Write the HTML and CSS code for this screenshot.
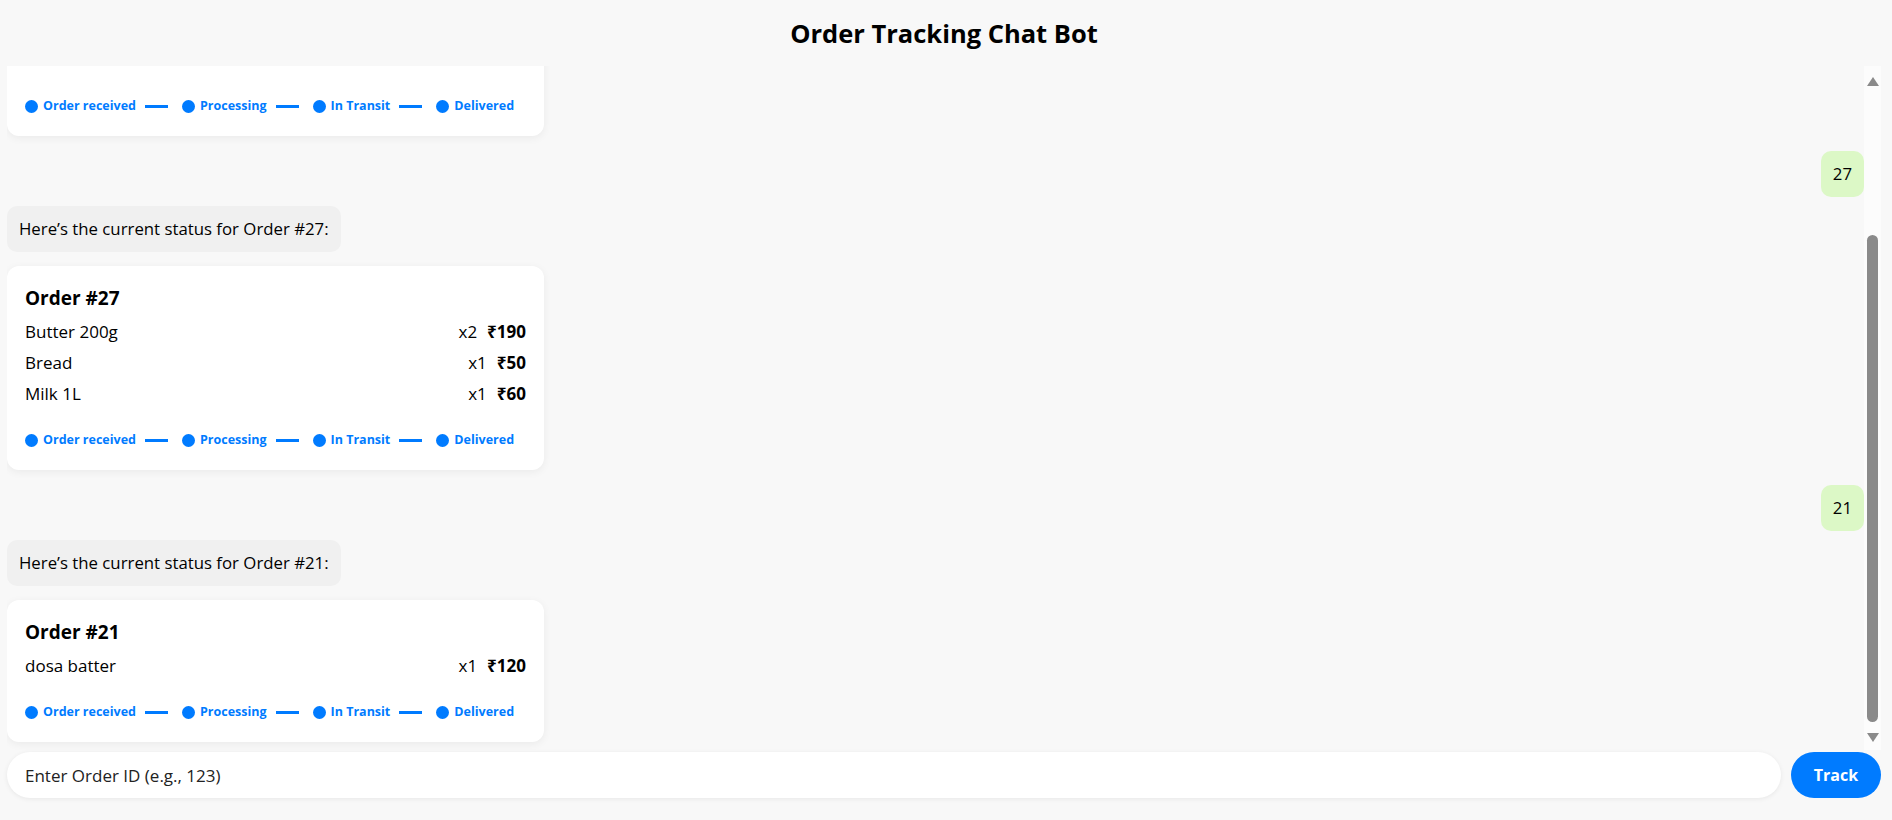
FILE: index.html
```html
<!DOCTYPE html>
<html lang="en">
<head>
<meta charset="utf-8">
<title>Order Tracking Chat Bot</title>
<link rel="stylesheet" href="styles.css">
</head>
<body>
<div class="app">
  <header class="header">
    <h1 class="title">Order Tracking Chat Bot</h1>
  </header>

  <div class="chat">
    <div class="viewport">
      <div class="thread">
        <div class="msg user">25</div>
        <div class="msg bot">Here’s the current status for Order #25:</div>
        <div class="card">
          <h3 class="card-title">Order #25</h3>
          <div class="item"><span class="name">Curd 500g</span><span class="qty">x1</span><span class="price">₹45</span></div>
          <div class="item"><span class="name">Milk 500ml</span><span class="qty">x2</span><span class="price">₹56</span></div>
          <div class="status">
            <span class="step"><span class="dot"></span>Order received</span>
            <span class="line"></span>
            <span class="step"><span class="dot"></span>Processing</span>
            <span class="line"></span>
            <span class="step"><span class="dot"></span>In Transit</span>
            <span class="line"></span>
            <span class="step"><span class="dot"></span>Delivered</span>
          </div>
        </div>

        <div class="msg user">27</div>
        <div class="msg bot">Here’s the current status for Order #27:</div>
        <div class="card">
          <h3 class="card-title">Order #27</h3>
          <div class="item"><span class="name">Butter 200g</span><span class="qty">x2</span><span class="price">₹190</span></div>
          <div class="item"><span class="name">Bread</span><span class="qty">x1</span><span class="price">₹50</span></div>
          <div class="item"><span class="name">Milk 1L</span><span class="qty">x1</span><span class="price">₹60</span></div>
          <div class="status">
            <span class="step"><span class="dot"></span>Order received</span>
            <span class="line"></span>
            <span class="step"><span class="dot"></span>Processing</span>
            <span class="line"></span>
            <span class="step"><span class="dot"></span>In Transit</span>
            <span class="line"></span>
            <span class="step"><span class="dot"></span>Delivered</span>
          </div>
        </div>

        <div class="msg user">21</div>
        <div class="msg bot">Here’s the current status for Order #21:</div>
        <div class="card">
          <h3 class="card-title">Order #21</h3>
          <div class="item"><span class="name">dosa batter</span><span class="qty">x1</span><span class="price">₹120</span></div>
          <div class="status">
            <span class="step"><span class="dot"></span>Order received</span>
            <span class="line"></span>
            <span class="step"><span class="dot"></span>Processing</span>
            <span class="line"></span>
            <span class="step"><span class="dot"></span>In Transit</span>
            <span class="line"></span>
            <span class="step"><span class="dot"></span>Delivered</span>
          </div>
        </div>
      </div>
    </div>

    <div class="scrollbar" aria-hidden="true">
      <span class="sb-arrow up"></span>
      <div class="sb-track"><div class="sb-thumb"></div></div>
      <span class="sb-arrow down"></span>
    </div>
  </div>

  <form class="composer">
    <input class="order-input" type="text" placeholder="Enter Order ID (e.g., 123)">
    <button class="track-btn" type="button">Track</button>
  </form>
</div>
</body>
</html>
```

FILE: styles.css
```css
* {
  box-sizing: border-box;
}

html, body {
  margin: 0;
  padding: 0;
  height: 100%;
}

body {
  background: #f8f8f8;
  font-family: "Open Sans", "Noto Sans", "DejaVu Sans", sans-serif;
  font-size: 17px;
  color: #000;
}

.app {
  height: 100vh;
  display: flex;
  flex-direction: column;
  padding: 0 11px 22px 7px;
}

.header {
  height: 66px;
  flex: none;
  display: flex;
  align-items: center;
  justify-content: center;
}

.title {
  margin: 0;
  font-size: 25.5px;
  font-weight: 700;
  line-height: 32px;
}

/* chat area: messages + scrollbar */
.chat {
  flex: 1;
  min-height: 0;
  display: flex;
}

.viewport {
  flex: 1;
  min-width: 0;
  overflow: hidden;
  display: flex;
  flex-direction: column;
  justify-content: flex-end;
}

.scrollbar {
  flex: none;
  width: 17px;
  background: #fcfcfc;
  display: flex;
  flex-direction: column;
  align-items: center;
  padding: 11px 0 8px;
}

.sb-arrow {
  width: 0;
  height: 0;
  border-left: 6px solid transparent;
  border-right: 6px solid transparent;
}

.sb-arrow.up {
  border-bottom: 9px solid #8a8a8a;
}

.sb-arrow.down {
  border-top: 9px solid #8a8a8a;
}

.sb-track {
  flex: 1;
  display: flex;
  flex-direction: column;
  justify-content: flex-end;
  padding-bottom: 11px;
}

.sb-thumb {
  width: 11px;
  height: 487px;
  border-radius: 6px;
  background: #8a8a8a;
}

.thread {
  display: flex;
  flex-direction: column;
  padding: 10px 0 8px;
}

.msg {
  padding: 12px;
  font-size: 16.8px;
  line-height: 22px;
  border-radius: 10px;
}

.msg.user {
  align-self: flex-end;
  background: #dcf8c6;
  margin-top: 15px;
}

.msg.user:first-child {
  margin-top: 0;
}

.msg.bot {
  align-self: flex-start;
  background: #f0f0f0;
  margin-top: 9px;
}

.card {
  align-self: flex-start;
  width: 537px;
  margin-top: 14px;
  background: #fff;
  border-radius: 12px;
  padding: 18px 18px 22px;
  box-shadow: 0 2px 8px rgba(0, 0, 0, 0.06);
}

.card-title {
  margin: 0 0 8px;
  font-size: 19px;
  font-weight: 700;
  line-height: 28px;
}

.item {
  display: flex;
  align-items: center;
  height: 24px;
  line-height: 24px;
}

.item + .item {
  margin-top: 7px;
}

.item .name {
  flex: 1;
}

.item .price {
  margin-left: 10px;
  font-weight: 700;
}

.status {
  display: flex;
  align-items: center;
  margin-top: 26px;
  height: 16px;
  font-size: 12.5px;
  font-weight: 700;
  color: #007bff;
  line-height: 16px;
}

.step {
  display: flex;
  align-items: center;
  gap: 5px;
}

.dot {
  width: 13px;
  height: 13px;
  border-radius: 50%;
  background: #007bff;
}

.line {
  width: 23px;
  height: 3px;
  background: #007bff;
  margin: 0 14px 0 9px;
}

.composer {
  flex: none;
  margin: 2px 0 0;
  display: flex;
  gap: 10px;
  height: 46px;
}

.order-input {
  flex: 1;
  min-width: 0;
  height: 46px;
  border: none;
  outline: none;
  border-radius: 23px;
  background: #fff;
  padding: 0 18px;
  font-family: inherit;
  font-size: 17px;
  color: #222;
  box-shadow: 0 1px 5px rgba(0, 0, 0, 0.07);
}

.order-input::placeholder {
  color: #222;
  opacity: 1;
}

.track-btn {
  flex: none;
  width: 90px;
  height: 46px;
  border: none;
  border-radius: 23px;
  background: #007bff;
  color: #fff;
  font-family: inherit;
  font-size: 16px;
  font-weight: 700;
  cursor: pointer;
}
```
